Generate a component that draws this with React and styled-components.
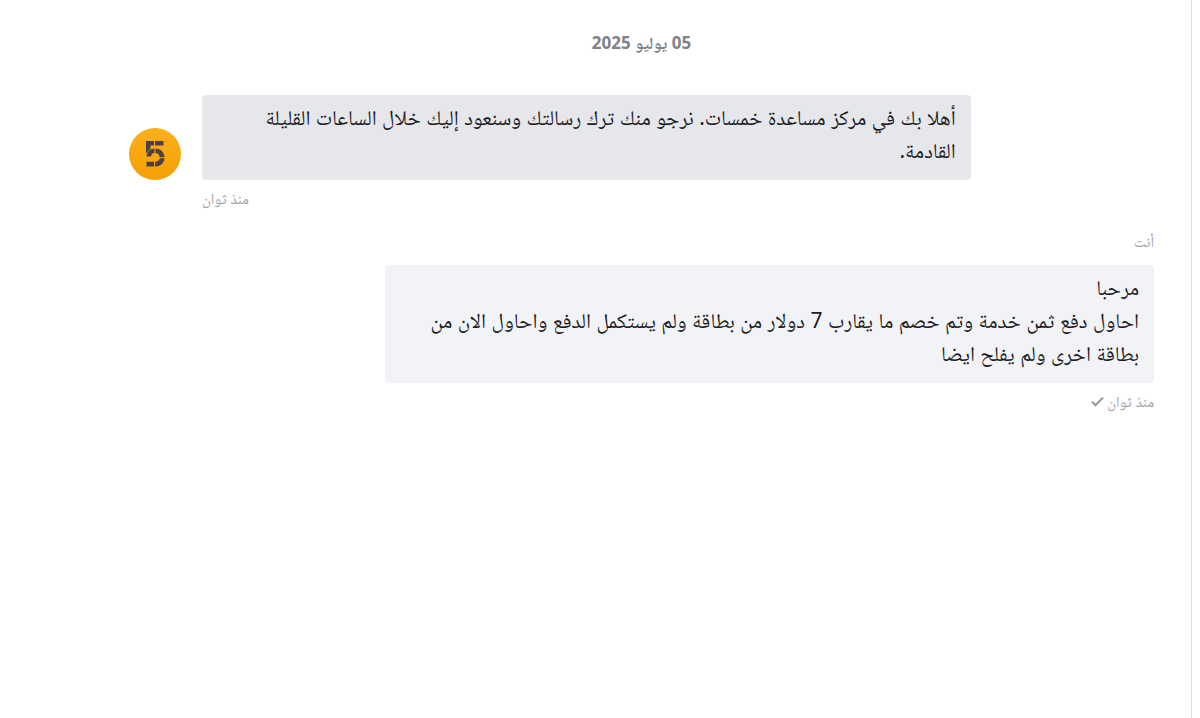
import React from "react";
import styled, { createGlobalStyle } from "styled-components";

const GlobalStyle = createGlobalStyle`
  * { box-sizing: border-box; }
  body {
    margin: 0;
    background: #fff;
    color: #1c1c1f;
    font-family: "Noto Sans", "Noto Naskh Arabic", "DejaVu Sans", sans-serif;
  }
`;

const Chat = styled.main`
  min-height: 100vh;
  margin-right: 8px;
  padding: 30px 37px 30px 129px;
  border-right: 1px solid #dcdde0;
`;

const DateLabel = styled.h2`
  margin: 0 0 39px;
  font-size: 17px;
  line-height: 26px;
  font-weight: 700;
  color: #808288;
  text-align: center;
`;

const Thread = styled.div`
  display: flex;
  flex-direction: column;
  gap: 21px;
`;

const Message = styled.article`
  display: flex;
  flex-direction: column;
`;

const SupportRow = styled.div`
  display: flex;
  justify-content: flex-end;
  align-items: flex-end;
  gap: 21px;
`;

const Bubble = styled.div`
  width: 75%;
  padding: 6px 15px 13px;
  border-radius: 4px;
  background: ${(p) => (p.$own ? "#f2f3f7" : "#e6e7eb")};
  font-size: 21px;
  line-height: 33px;
  white-space: pre-line;
`;

const Author = styled.div`
  margin-bottom: 13px;
  font-size: 15px;
  line-height: 22px;
  color: #9fa1a7;
`;

const Meta = styled.div`
  display: flex;
  align-items: center;
  gap: 3px;
  align-self: ${(p) => (p.$own ? "flex-start" : "flex-end")};
  margin-top: 7px;
  margin-left: ${(p) => (p.$own ? "0" : "73px")};
  font-size: 15px;
  line-height: 22px;
  color: #9fa1a7;
`;

const Avatar = styled.svg`
  display: block;
  flex: none;
  width: 52px;
  height: 52px;
`;

const Check = styled.svg`
  display: block;
  width: 13px;
  height: 12px;
`;

function SupportAvatar() {
  return (
    <Avatar viewBox="0 0 52 52" role="img" aria-label="خمسات">
      <defs>
        <linearGradient id="gold" x1="0" y1="0" x2="0" y2="1">
          <stop offset="0" stopColor="#fbb01c" />
          <stop offset="1" stopColor="#f5a004" />
        </linearGradient>
      </defs>
      <circle cx="26" cy="26" r="26" fill="url(#gold)" />
      <g fill="#4a4045">
        <path d="M17 13H25V17.500H21.500V20.500L17 25.500Z" />
        <path d="M26 13H34.500V17.500H26Z" />
        <path d="M25.500 20.500V25C23.500 25 22.500 26 22 28.500H17.500C18 24 21 20.500 25.500 20.500Z" />
        <path d="M26.500 20.500C31.500 20.500 35.500 24.500 35.500 29.200H30.800C30.500 27 29 25.200 26.500 25Z" />
        <path d="M17.500 33.700H25V38.500H17.500Z" />
        <path d="M26 33.700C28.500 33.700 30.500 32.500 30.800 30.200H35.500C35.500 35 31 38.500 26 38.500Z" />
      </g>
    </Avatar>
  );
}

export default function App() {
  return (
    <Chat dir="rtl">
      <GlobalStyle />
      <DateLabel>05 يوليو 2025</DateLabel>
      <Thread>
        <Message>
          <SupportRow>
            <Bubble>أهلا بك في مركز مساعدة خمسات. نرجو منك ترك رسالتك وسنعود إليك خلال الساعات القليلة القادمة.</Bubble>
            <SupportAvatar />
          </SupportRow>
          <Meta>منذ ثوان</Meta>
        </Message>
        <Message>
          <Author>أنت</Author>
          <Bubble $own>{"مرحبا\nاحاول دفع ثمن خدمة وتم خصم ما يقارب 7 دولار من بطاقة ولم يستكمل الدفع واحاول الان من بطاقة اخرى ولم يفلح ايضا"}</Bubble>
          <Meta $own>
            منذ ثوان
            <Check viewBox="0 0 13 12" aria-hidden="true">
              <path d="M1 6.500L4.500 10.200L12 2.500" fill="none" stroke="#96989d" strokeWidth="2" />
            </Check>
          </Meta>
        </Message>
      </Thread>
    </Chat>
  );
}
